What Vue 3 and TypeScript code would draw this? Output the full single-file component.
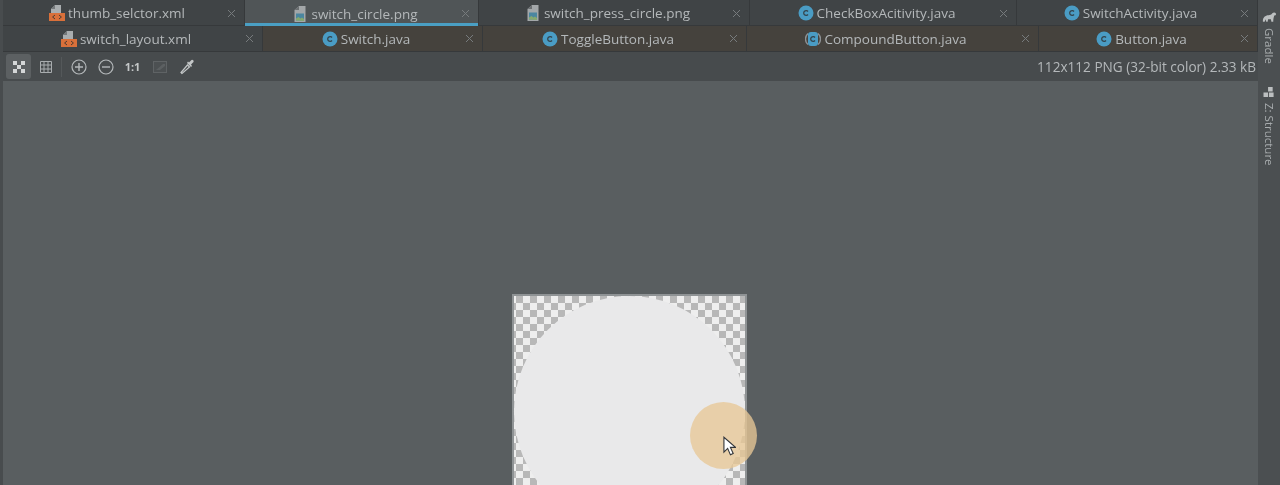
<template>
  <div class="ide">
    <div class="main">
      <div v-for="(row, r) in rows" :key="r" class="tab-row">
        <div
          v-for="tab in row"
          :key="tab.name"
          class="tab"
          :class="{ active: tab.active, pinned: r === 1 && tab.kind !== 'xml' }"
          :style="{ width: tab.width + 'px' }"
        >
          <span class="label">
            <svg v-if="tab.kind === 'xml'" class="ico" viewBox="0 0 16 16">
              <path d="M6 0h6v8H2V4z" fill="#a9adaf" />
              <path d="M2 4h4V0z" fill="#74787a" />
              <rect x="0" y="8" width="16" height="8" fill="#d9703a" />
              <path d="M6 10l-2.400 2L6 14M10 10l2.400 2L10 14" fill="none" stroke="#4a3a30" stroke-width="1" />
            </svg>
            <svg v-else-if="tab.kind === 'png'" class="ico" viewBox="0 0 16 16">
              <path d="M7 0h6.500v16H2.500V4z" fill="#a3a7a9" />
              <path d="M2.500 4H7V0z" fill="#6b6f71" />
              <rect x="4" y="7.500" width="8" height="7" fill="#4b86a0" />
              <path d="M4 14.500v-2l2.500-1.500 2 1.500 1.500-1 2 1.500v2z" fill="#86a86f" />
            </svg>
            <svg v-else class="ico" viewBox="0 0 16 16">
              <template v-if="tab.kind === 'abstract'">
                <path d="M3 2.400A7.500 7.500 0 0 0 3 13.600M13 2.400a7.500 7.500 0 0 1 0 11.200" fill="none" stroke="#8d9194" stroke-width="1.400" />
                <rect x="3" y="1" width="10" height="14" rx="3" fill="#4a9cc4" />
              </template>
              <circle v-else cx="8" cy="8" r="7.500" fill="#4a9cc4" />
              <path d="M10 6.500a2.400 2.400 0 1 0 0 3" fill="none" stroke="#34444c" stroke-width="1.300" />
            </svg>
            <span class="name">{{ tab.name }}</span>
          </span>
          <svg class="close" viewBox="0 0 9 9">
            <path d="M1 1l7 7M8 1l-7 7" stroke="#777b7d" stroke-width="1" />
          </svg>
        </div>
      </div>

      <div class="toolbar">
        <button class="tool on">
          <svg viewBox="0 0 16 16"><path d="M2 2h4v4H2zM10 2h4v4h-4zM6 6h4v4H6zM2 10h4v4H2zM10 10h4v4h-4z" fill="#d4d6d7" /></svg>
        </button>
        <button class="tool">
          <svg viewBox="0 0 16 16"><path d="M2.500 2.500h11v11h-11zM6 2.500v11M10 2.500v11M2.500 6h11M2.500 10h11" fill="none" stroke="#a9adaf" /></svg>
        </button>
        <i class="sep"></i>
        <button class="tool">
          <svg viewBox="0 0 16 16"><circle cx="8" cy="8" r="7" fill="none" stroke="#b4b8ba" stroke-width="1.200" /><path d="M4 8h8M8 4v8" stroke="#b4b8ba" stroke-width="1.400" /></svg>
        </button>
        <button class="tool">
          <svg viewBox="0 0 16 16"><circle cx="8" cy="8" r="7" fill="none" stroke="#b4b8ba" stroke-width="1.200" /><path d="M4 8h8" stroke="#b4b8ba" stroke-width="1.400" /></svg>
        </button>
        <button class="tool ratio">1:1</button>
        <button class="tool">
          <svg viewBox="0 0 16 16"><rect x="1.500" y="2.500" width="13" height="11" fill="#4c5052" stroke="#5f6365" /><path d="M4 11l7-6h2v2l-5 4z" fill="#5c6062" /></svg>
        </button>
        <button class="tool">
          <svg viewBox="0 0 16 16">
            <path d="M3 14.500l-1-1 6.500-7.500 2 2z" fill="none" stroke="#c4c7c8" stroke-width="1.200" />
            <path d="M8 4l4 4 1-1-1-1.500 2.500-2.500a1.500 1.500 0 0 0-2-2L10 3.500 9 2.500z" fill="#c4c7c8" />
          </svg>
        </button>
        <span class="info">112x112 PNG (32-bit color) 2.33 kB</span>
      </div>

      <div class="canvas">
        <div class="picture">
          <div class="disc"></div>
        </div>
        <div class="click-mark">
          <svg class="pointer" viewBox="0 0 14 22">
            <path d="M1 1v16l4-4 3 7 3-1.500-3-6.500h5.500z" fill="#fff" stroke="#33363a" stroke-width="1.200" />
          </svg>
        </div>
      </div>
    </div>

    <aside class="strip">
      <div class="side-item">
        <svg class="side-ico" viewBox="0 0 16 12">
          <path d="M1 11c-.5-4 2-7 6-7 1.500 0 3-.5 4-2 1.500-1.500 3-1 4 .5 0 1.500-1 2-2 2-.5 2-1 4-1 6.500h-2l-.5-2.500H6.500L6 11H4.500L4 8.500 2.800 11z" fill="#bcbfc0" />
        </svg>
        <span class="side-text">Gradle</span>
      </div>
      <div class="side-item second">
        <svg class="side-ico small" viewBox="0 0 12 12">
          <path d="M5 0h5v5H5zM0 6h5v5H0zM6 6h5v5H6z" fill="#bcbfc0" />
        </svg>
        <span class="side-text">Z: Structure</span>
      </div>
    </aside>
  </div>
</template>

<script setup lang="ts">
type Kind = 'xml' | 'png' | 'class' | 'abstract';

interface Tab {
  name: string;
  kind: Kind;
  width: number;
  active?: boolean;
}

const rows: Tab[][] = [
  [
    { name: 'thumb_selctor.xml', kind: 'xml', width: 242 },
    { name: 'switch_circle.png', kind: 'png', width: 234, active: true },
    { name: 'switch_press_circle.png', kind: 'png', width: 271 },
    { name: 'CheckBoxAcitivity.java', kind: 'class', width: 267 },
    { name: 'SwitchActivity.java', kind: 'class', width: 241 },
  ],
  [
    { name: 'switch_layout.xml', kind: 'xml', width: 260 },
    { name: 'Switch.java', kind: 'class', width: 220 },
    { name: 'ToggleButton.java', kind: 'class', width: 264 },
    { name: 'CompoundButton.java', kind: 'abstract', width: 292 },
    { name: 'Button.java', kind: 'class', width: 219 },
  ],
];
</script>

<style>
html,
body {
  margin: 0;
  background: #595e60;
}
</style>

<style scoped>
.ide {
  display: flex;
  width: 1280px;
  height: 485px;
  overflow: hidden;
  font-family: 'Open Sans', 'Noto Sans', sans-serif;
  color: #b4b8ba;
  filter: blur(0.35px);
}

.main {
  display: flex;
  flex-direction: column;
  width: 1258px;
  padding-left: 3px;
  box-sizing: border-box;
  background: #484c4e;
}

.tab-row {
  display: flex;
  height: 26px;
  flex: none;
}

.tab {
  display: flex;
  align-items: center;
  box-sizing: border-box;
  padding-left: 9px;
  background: #404446;
  border-right: 1px solid #36393b;
  border-bottom: 1px solid #36393b;
}

.tab-row:first-child .tab {
  padding-top: 1px;
}

.tab.pinned {
  background: #45423d;
}

.tab.active {
  background: #505557;
  border-bottom: 0;
  box-shadow: inset 0 -3px 0 #4a9fc4;
}

.label {
  flex: 1;
  display: flex;
  align-items: center;
  justify-content: center;
  gap: 3px;
}

.ico {
  width: 16px;
  height: 16px;
  flex: none;
}

.name {
  font-size: 13.500px;
  white-space: nowrap;
}

.close {
  width: 9px;
  height: 9px;
  margin: 0 8px 0 5px;
  flex: none;
}

.toolbar {
  display: flex;
  align-items: center;
  height: 29px;
  flex: none;
  padding-left: 3px;
  gap: 2px;
  background: #474b4d;
  box-sizing: border-box;
}

.tool {
  display: flex;
  align-items: center;
  justify-content: center;
  width: 25px;
  height: 25px;
  padding: 0;
  border: 0;
  border-radius: 3px;
  background: none;
  color: #c4c7c8;
  font: 700 11px 'Open Sans', sans-serif;
}

.tool.on {
  background: #5c6062;
}

.tool svg {
  width: 16px;
  height: 16px;
}

.sep {
  width: 1px;
  height: 20px;
  margin: 0 2px 0 1px;
  background: #54585a;
}

.info {
  margin-left: auto;
  margin-right: 2px;
  font-size: 13.600px;
  white-space: nowrap;
}

.canvas {
  position: relative;
  flex: 1;
  display: flex;
  justify-content: flex-start;
  align-items: flex-start;
  padding: 213px 0 0 509px;
  background: #595e60;
  overflow: hidden;
}

.picture {
  width: 231px;
  height: 231px;
  flex: none;
  border: 2px solid #8f9395;
  background: repeating-conic-gradient(#b8b8b8 0 25%, #eeeeee 0 50%) -5px 0 / 14px 14px;
}

.disc {
  width: 100%;
  height: 100%;
  border-radius: 50%;
  background: #e9e9ea;
}

.click-mark {
  position: absolute;
  left: 687px;
  top: 321px;
  width: 67px;
  height: 67px;
  border-radius: 50%;
  background: rgba(232, 200, 150, 0.78);
}

.pointer {
  position: absolute;
  left: 33px;
  top: 34px;
  width: 13px;
  height: 21px;
}

.strip {
  display: flex;
  flex-direction: column;
  align-items: center;
  width: 22px;
  flex: none;
  padding-top: 11px;
  background: #4b4f51;
}

.side-item {
  display: flex;
  flex-direction: column;
  align-items: center;
  gap: 5px;
}

.side-item.second {
  margin-top: 23px;
}

.side-ico {
  width: 15px;
  height: 12px;
}

.side-ico.small {
  width: 12px;
  height: 11px;
}

.side-text {
  writing-mode: vertical-rl;
  font-size: 11.500px;
  color: #a9adaf;
  white-space: nowrap;
}
</style>
